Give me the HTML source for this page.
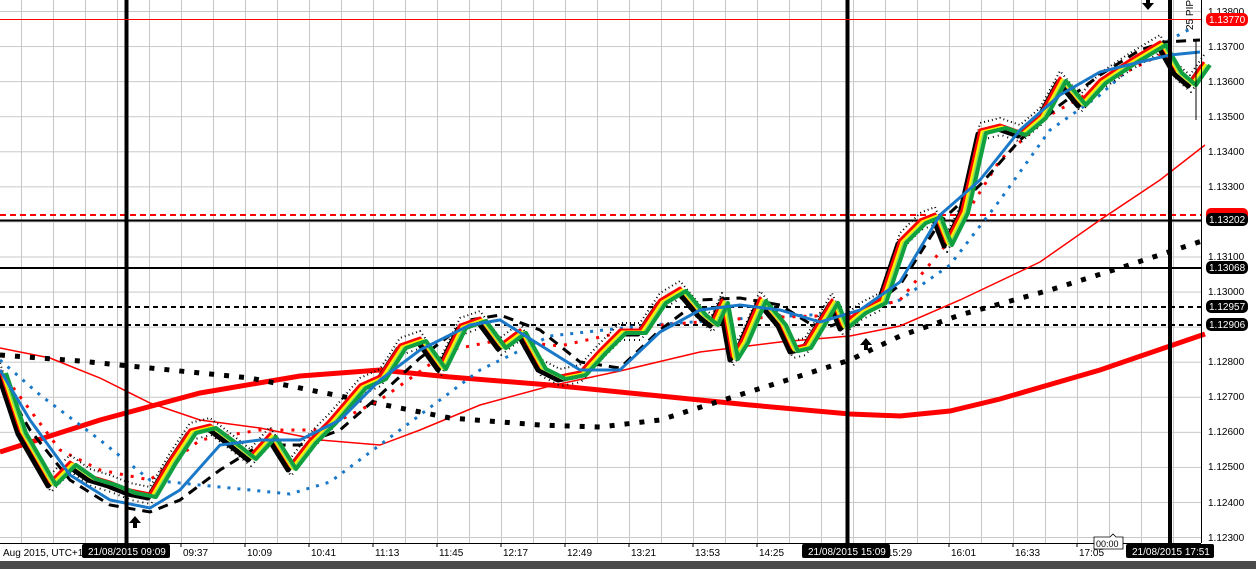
<!DOCTYPE html>
<html><head><meta charset="utf-8"><style>
html,body{margin:0;padding:0;background:#fff;width:1256px;height:569px;overflow:hidden}
svg{display:block}
text{font-family:"Liberation Sans",sans-serif}
</style></head><body>
<svg width="1256" height="569" viewBox="0 0 1256 569" xmlns="http://www.w3.org/2000/svg">
<rect width="1256" height="569" fill="#fff"/>
<defs>
<pattern id="vg" x="21" y="0" width="32" height="569" patternUnits="userSpaceOnUse"><rect x="0" y="0" width="1" height="569" fill="#c8c8c8"/></pattern>
<pattern id="hg" x="0" y="11" width="1256" height="35.07" patternUnits="userSpaceOnUse"><rect x="0" y="0" width="1256" height="1" fill="#c8c8c8"/></pattern>
<path id="px" fill="none" stroke-linejoin="round" d="M0,370 L20,430 L50,482 L70,462 L90,476 L110,482 L130,490 L150,494 L170,460 L190,430 L210,425 L230,440 L250,456 L270,434 L290,466 L310,440 L330,420 L360,385 L380,376 L400,345 L420,338 L440,366 L460,325 L480,318 L500,345 L520,330 L540,366 L560,376 L580,372 L600,350 L620,330 L640,330 L660,300 L680,288 L700,312 L712,322 L722,300 L732,356 L742,340 L760,298 L780,322 L792,348 L805,345 L820,320 L832,300 L842,325 L860,310 L880,300 L900,240 L920,220 L935,214 L946,242 L962,210 L980,130 L1000,125 L1020,132 L1040,115 L1060,78 L1080,102 L1100,80 L1130,60 L1160,42 L1176,70 L1190,82 L1204,62"/>
</defs>
<rect x="0" y="0" width="1201" height="543" fill="url(#vg)"/>
<rect x="0" y="0" width="1201" height="543" fill="url(#hg)"/>

<!-- horizontal levels -->
<line x1="0" y1="215" x2="1201" y2="215" stroke="#ff0000" stroke-width="2" stroke-dasharray="6,4"/>
<line x1="0" y1="220.5" x2="1201" y2="220.5" stroke="#000" stroke-width="2"/>
<line x1="0" y1="268" x2="1201" y2="268" stroke="#000" stroke-width="2"/>
<line x1="0" y1="307" x2="1201" y2="307" stroke="#000" stroke-width="2" stroke-dasharray="5,4"/>
<line x1="0" y1="325" x2="1201" y2="325" stroke="#000" stroke-width="2" stroke-dasharray="5,4"/>

<polyline fill="none" stroke="#ff0000" stroke-width="5" points="0,452 100,420 200,393 300,376 380,370 450,377 550,385 650,395 750,405 850,414 900,416 950,411 1000,399 1100,370 1205,334"/>
<polyline fill="none" stroke="#ff0000" stroke-width="1.5" points="0,348 50,358 100,378 150,403 200,420 260,428 320,440 380,445 420,430 480,405 550,386 620,371 700,352 780,342 850,336 900,326 960,300 1040,262 1100,220 1160,180 1205,145"/>
<polyline fill="none" stroke="#000" stroke-width="5" stroke-dasharray="5,10" points="0,355 80,361 150,368 250,378 350,398 450,418 540,425 600,427 660,420 720,401 800,376 850,360 900,336 960,315 1050,290 1120,268 1205,240"/>
<polyline fill="none" stroke="#1a78c8" stroke-width="3" stroke-dasharray="3,7" points="0,360 40,395 100,440 150,480 220,487 290,494 330,482 400,430 480,370 550,336 650,325 750,318 850,313 900,300 950,265 1000,200 1050,130 1100,95 1150,50 1192,28"/>
<polyline fill="none" stroke="#ff0000" stroke-width="3" stroke-dasharray="3,8" points="0,370 60,450 100,470 150,480 200,440 260,430 320,430 380,400 450,350 500,340 560,346 650,326 750,318 850,315 900,300 950,240 1000,160 1050,115 1120,75 1160,55"/>
<polyline fill="none" stroke="#000" stroke-width="3" stroke-dasharray="10,7" points="0,378 30,430 70,480 110,505 150,512 180,500 220,470 260,445 300,445 340,430 380,395 420,358 470,320 500,315 540,330 580,362 620,368 660,330 700,300 740,298 780,305 820,330 860,315 900,285 940,222 980,185 1020,140 1060,105 1100,75 1140,50 1165,42 1200,40"/>

<!-- price -->
<use href="#px" stroke="#000" stroke-width="5" transform="translate(-2,4)"/>
<use href="#px" stroke="#000" stroke-width="2" stroke-dasharray="1,3" transform="translate(0,-7)"/>
<use href="#px" stroke="#000" stroke-width="2" stroke-dasharray="1,4" transform="translate(1,10)"/>
<use href="#px" stroke="#ff0000" stroke-width="3" transform="translate(0,0)"/>
<use href="#px" stroke="#ffee00" stroke-width="3" transform="translate(2,2)"/>
<use href="#px" stroke="#88e060" stroke-width="3" transform="translate(4,3)"/>
<use href="#px" stroke="#10a040" stroke-width="4" transform="translate(6,3)"/>

<polyline fill="none" stroke="#1a78c8" stroke-width="3" points="0,370 30,420 70,475 110,500 150,508 180,490 220,445 260,440 300,440 340,420 380,380 420,350 470,325 500,320 540,345 580,370 620,370 660,332 700,310 740,305 780,310 820,322 860,310 900,282 940,215 980,180 1020,130 1060,95 1100,72 1140,62 1170,55 1200,52"/>

<rect x="124.5" y="0" width="4" height="543" fill="#000"/>
<rect x="845.5" y="0" width="4" height="543" fill="#000"/>
<rect x="1168" y="0" width="4" height="543" fill="#000"/>

<rect x="0" y="19" width="1201" height="1" fill="#ff0000"/>

<path d="M135,516 l-6,7 h4 v5 h4 v-5 h4 z" fill="#000"/>
<path d="M866,338 l-6,7 h4 v5 h4 v-5 h4 z" fill="#000"/>
<path d="M1148,10 l-6,-7 h4 v-5 h4 v5 h4 z" fill="#000"/>
<text x="0" y="0" font-size="10" transform="translate(1193,30) rotate(-90)" fill="#000">25 PIPS</text>
<line x1="1196" y1="40" x2="1196" y2="120" stroke="#000"/>

<line x1="1201.5" y1="0" x2="1201.5" y2="543" stroke="#000" stroke-width="1"/>
<line x1="0" y1="543.5" x2="1201" y2="543.5" stroke="#000" stroke-width="1"/>
<rect x="0" y="561" width="1256" height="8" fill="#4a4a4a"/>

<g font-size="10" fill="#000">
<text x="1208" y="15">1.13800</text>
<text x="1208" y="50">1.13700</text>
<text x="1208" y="85">1.13600</text>
<text x="1208" y="120">1.13500</text>
<text x="1208" y="155">1.13400</text>
<text x="1208" y="190">1.13300</text>
<text x="1208" y="260">1.13100</text>
<text x="1208" y="295">1.13000</text>
<text x="1208" y="365">1.12800</text>
<text x="1208" y="400">1.12700</text>
<text x="1208" y="435">1.12600</text>
<text x="1208" y="470">1.12500</text>
<text x="1208" y="506">1.12400</text>
<text x="1208" y="541">1.12300</text>
</g>
<g font-size="10">
<rect x="1206" y="13" width="42" height="13" rx="5" fill="#ff0000"/><text x="1209" y="23" fill="#fff">1.13770</text>
<rect x="1206" y="208" width="42" height="13" rx="5" fill="#ff0000"/>
<rect x="1206" y="213" width="42" height="13" rx="5" fill="#000"/><text x="1209" y="223" fill="#fff">1.13202</text>
<rect x="1206" y="261" width="42" height="13" rx="5" fill="#000"/><text x="1209" y="271" fill="#fff">1.13068</text>
<rect x="1206" y="300" width="42" height="13" rx="5" fill="#000"/><text x="1209" y="310" fill="#fff">1.12957</text>
<rect x="1206" y="318" width="42" height="13" rx="5" fill="#000"/><text x="1209" y="328" fill="#fff">1.12906</text>
</g>

<g stroke="#000">
<line x1="181" y1="543" x2="181" y2="547"/><line x1="245" y1="543" x2="245" y2="547"/><line x1="309" y1="543" x2="309" y2="547"/><line x1="373" y1="543" x2="373" y2="547"/><line x1="437" y1="543" x2="437" y2="547"/><line x1="501" y1="543" x2="501" y2="547"/><line x1="565" y1="543" x2="565" y2="547"/><line x1="629" y1="543" x2="629" y2="547"/><line x1="693" y1="543" x2="693" y2="547"/><line x1="757" y1="543" x2="757" y2="547"/><line x1="885" y1="543" x2="885" y2="547"/><line x1="949" y1="543" x2="949" y2="547"/><line x1="1013" y1="543" x2="1013" y2="547"/><line x1="1077" y1="543" x2="1077" y2="547"/>
</g>
<g font-size="10" fill="#000">
<text x="3" y="556">Aug 2015, UTC+1</text>
<text x="183" y="556">09:37</text><text x="247" y="556">10:09</text><text x="311" y="556">10:41</text><text x="375" y="556">11:13</text><text x="439" y="556">11:45</text><text x="503" y="556">12:17</text><text x="567" y="556">12:49</text><text x="631" y="556">13:21</text><text x="695" y="556">13:53</text><text x="759" y="556">14:25</text><text x="887" y="556">15:29</text><text x="951" y="556">16:01</text><text x="1015" y="556">16:33</text><text x="1079" y="556">17:05</text>
</g>
<g font-size="10">
<rect x="82" y="544" width="88" height="14" rx="2" fill="#000"/><text x="88" y="555" fill="#fff">21/08/2015 09:09</text>
<rect x="802" y="544" width="88" height="14" rx="2" fill="#000"/><text x="808" y="555" fill="#fff">21/08/2015 15:09</text>
<rect x="1126" y="544" width="88" height="14" rx="2" fill="#000"/><text x="1132" y="555" fill="#fff">21/08/2015 17:51</text>
<path d="M1094,537 h16 l3,-3 l3,3 h7 v12 h-29 z" fill="#fff" stroke="#000" stroke-width="0.8"/><text x="1096" y="547" fill="#000" font-size="9">00:00</text>
</g>
</svg>
</body></html>
